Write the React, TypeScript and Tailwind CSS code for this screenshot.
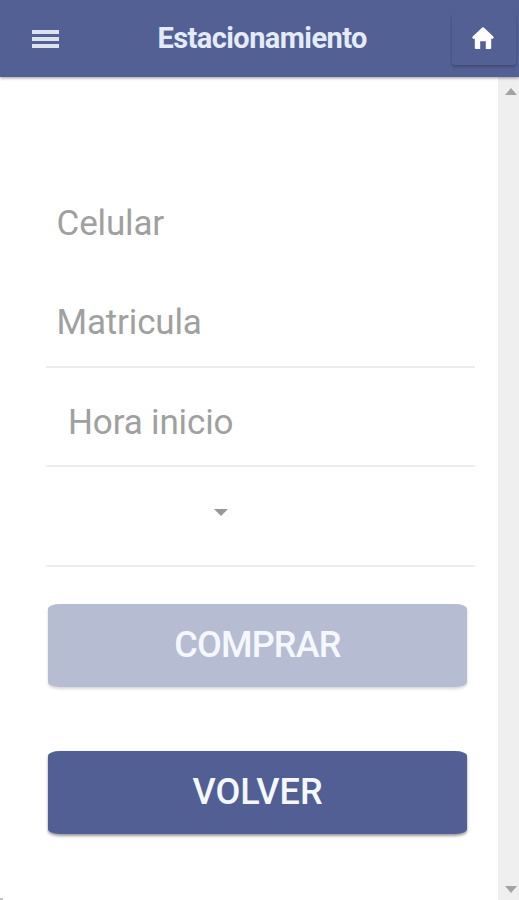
import type { ReactNode } from 'react';
import clsx from 'clsx';

interface FieldProps {
    children: ReactNode;
    underline?: boolean;
    className?: string;
}

function Field({ children, underline = true, className }: FieldProps) {
    return (
        <div
            className={clsx(
                'flex h-[99.6px] items-center border-b-2 pt-[12px] text-[35px] leading-none tracking-[-0.15px] text-[#a0a0a0]',
                underline ? 'border-[#ececec]' : 'border-transparent',
                className,
            )}
        >
            {children}
        </div>
    );
}

interface ActionButtonProps {
    label: string;
    disabled?: boolean;
    textClass?: string;
}

function ActionButton({ label, disabled = false, textClass }: ActionButtonProps) {
    return (
        <button
            disabled={disabled}
            className={clsx(
                'ml-[2px] flex h-[83px] w-[419px] items-center justify-center rounded-[12px/5px] text-[36px] leading-none font-medium text-[#f4f8fd]',
                disabled
                    ? 'bg-[#b6bdd3] shadow-[0_2px_3px_rgba(0,0,0,0.16)]'
                    : 'bg-[#515f94] shadow-[0_2px_3px_rgba(0,0,0,0.4)]',
            )}
        >
            <span className={textClass}>{label}</span>
        </button>
    );
}

function Header() {
    return (
        <header className="relative z-10 flex h-[77px] shrink-0 items-center bg-[#536094] shadow-[0_1px_3px_rgba(0,0,0,0.4)]">
            {/* Menu toggle */}
            <button className="ml-8 flex w-[27px] flex-col gap-[3px]" aria-label="Menu">
                <span className="h-1 w-full bg-[#dde3ee]" />
                <span className="h-1 w-full bg-[#dde3ee]" />
                <span className="h-1 w-full bg-[#dde3ee]" />
            </button>
            <h1 className="ml-[98.5px] w-[209px] text-[29px] leading-none font-bold tracking-[-0.58px] whitespace-nowrap text-[#e3ebf7]">
                Estacionamiento
            </h1>
            {/* Home */}
            <button
                className="mr-[3px] ml-auto flex h-[52px] w-[64px] items-center justify-center rounded-[3px] pr-[2px] pb-[2px] shadow-[0_2px_3px_rgba(0,0,0,0.25)]"
                aria-label="Inicio"
            >
                <svg viewBox="0 0 22 22" className="h-[22px] w-[22px]" fill="#fff">
                    <path d="M10.2 0.5Q11 0 11.8 0.5L21.3 9.6Q22.3 11.5 20.8 11.7H19.2V21Q19.2 22 18.2 22H13.8V14.2H8.2V22H3.8Q2.8 22 2.8 21V11.7H1.2Q-0.3 11.5 0.7 9.6Z" />
                </svg>
            </button>
        </header>
    );
}

function Scrollbar() {
    return (
        <div className="flex w-[21px] flex-col items-end justify-between bg-[#efefef] pt-[11px] pr-[2px] pb-[7px]">
            <svg viewBox="0 0 12 7" className="h-[7px] w-3" fill="#a3a3a3">
                <path d="M6 0 12 7H0Z" />
            </svg>
            <svg viewBox="0 0 12 7" className="h-[7px] w-3" fill="#a3a3a3">
                <path d="M0 0H12L6 7Z" />
            </svg>
        </div>
    );
}

export default function App() {
    return (
        <div className="relative flex h-[900px] w-[519px] flex-col overflow-hidden bg-white font-[Roboto,sans-serif]">
            <Header />
            <div className="flex flex-1">
                <main className="flex-1 pt-[91.5px] pl-[46px]">
                    <form className="w-[429px]">
                        <Field underline={false} className="pl-[10.5px]">Celular</Field>
                        <Field className="pl-[10.5px]">Matricula</Field>
                        <Field className="pl-[22px]">Hora inicio</Field>
                        <Field className="pl-[168px]">
                            <svg viewBox="0 0 14 7" className="-mt-[20px] h-[7px] w-[14px]" fill="#989898">
                                <path d="M0 0H14L7 7Z" />
                            </svg>
                        </Field>
                    </form>
                    <div className="flex flex-col gap-16 pt-[37px]">
                        <ActionButton label="COMPRAR" disabled textClass="tracking-[-0.8px]" />
                        <ActionButton label="VOLVER" />
                    </div>
                </main>
                <Scrollbar />
            </div>
            {/* Edge of the device frame */}
            <span className="absolute bottom-0 left-0 h-[2px] w-[3px] bg-[#c4c4c4]" />
        </div>
    );
}
